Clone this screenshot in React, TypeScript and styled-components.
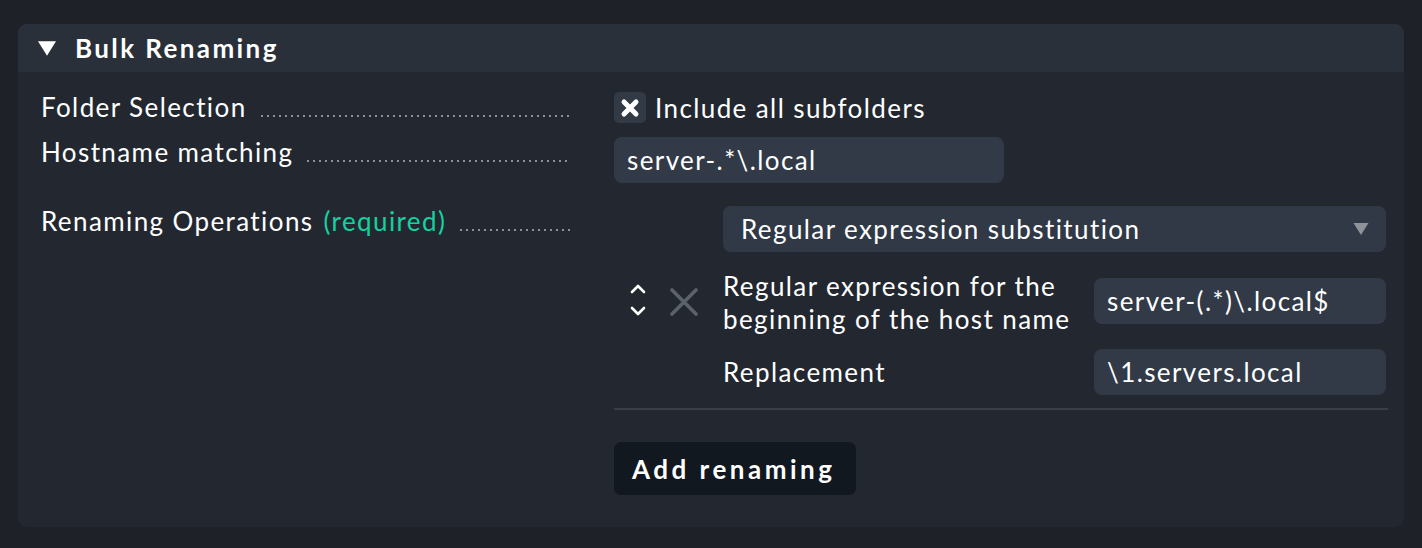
import React from "react";
import styled, { createGlobalStyle } from "styled-components";

const GlobalStyle = createGlobalStyle`
    html, body {
        margin: 0;
        padding: 0;
        background: #1e2128;
        font-family: Lato, "Noto Sans", sans-serif;
        color: #ffffff;
    }
`;

const Page = styled.div`
    padding: 24px 18px 21px 18px;
    height: 548px;
    box-sizing: border-box;
`;

const Panel = styled.section`
    background: #232830;
    border-radius: 9px;
    overflow: hidden;
    height: 503px;
`;

const PanelHeader = styled.header`
    background: #29303a;
    height: 48px;
    display: flex;
    align-items: center;
    padding-inline-start: 20px;
    gap: 19px;
`;

const Title = styled.h2`
    margin: 0;
    font-size: 26px;
    font-weight: 700;
    letter-spacing: 2.4px;
`;

const FormGrid = styled.div`
    display: grid;
    grid-template-columns: 530px 1fr;
    column-gap: 43px;
    row-gap: 14px;
    padding: 20px 16px 0 23px;
`;

const LabelCell = styled.div<{ $top?: number }>`
    display: flex;
    align-items: baseline;
    font-size: 26px;
    line-height: 30px;
    padding-top: ${(p) => p.$top ?? 0}px;
    white-space: nowrap;
    letter-spacing: 1.4px;
`;

const Leader = styled.span`
    flex: 1;
    margin-left: 12px;
    height: 2px;
    background-image: radial-gradient(circle, #8a9099 1px, transparent 1.2px);
    background-size: 6px 2px;
    background-repeat: repeat-x;
`;

const Required = styled.span`
    color: #15d1a0;
    margin-left: 10px;
`;

const ValueCell = styled.div<{ $top?: number }>`
    padding-top: ${(p) => p.$top ?? 0}px;
    letter-spacing: 1.4px;
`;

const CheckRow = styled.label`
    display: flex;
    align-items: center;
    gap: 9px;
    font-size: 26px;
    height: 31px;
`;

const CheckBox = styled.span`
    width: 32px;
    height: 31px;
    border-radius: 5px;
    background: #323a45;
    display: flex;
    align-items: center;
    justify-content: center;
`;

const TextInput = styled.div<{ $width?: number }>`
    box-sizing: border-box;
    width: ${(p) => (p.$width ? `${p.$width}px` : "100%")};
    height: 46px;
    background: #313a46;
    border-radius: 8px;
    padding: 0 13px;
    display: flex;
    align-items: center;
    font-size: 26px;
    color: #ffffff;
    white-space: nowrap;
`;

const Operations = styled.div`
    display: flex;
    flex-direction: column;
    width: 774px;
`;

const SelectBox = styled.div`
    box-sizing: border-box;
    margin-left: 109px;
    margin-right: 2px;
    height: 46px;
    background: #303945;
    border-radius: 8px;
    padding: 0 17px 0 18px;
    display: flex;
    align-items: center;
    justify-content: space-between;
    font-size: 26px;
`;

const OpEntry = styled.div`
    display: flex;
    margin-top: 18px;
`;

const Controls = styled.div`
    width: 109px;
    display: flex;
    align-items: flex-start;
    gap: 24px;
    padding-left: 16px;
    box-sizing: border-box;
`;

const Arrows = styled.div`
    display: flex;
    flex-direction: column;
    gap: 12px;
    padding-top: 14px;
`;

const RemoveWrap = styled.div`
    padding-top: 18px;
`;

const OpFields = styled.div`
    flex: 1;
    display: grid;
    grid-template-columns: 371px 1fr;
    align-items: center;
    row-gap: 13px;
    margin-right: 2px;
`;

const FieldLabel = styled.div`
    font-size: 26px;
    line-height: 33px;
    white-space: nowrap;
`;

const InputShift = styled.div`
    margin-top: -4px;
`;

const Divider = styled.hr`
    border: 0;
    height: 2px;
    background: #3a3f46;
    margin: 13px 0 0 0;
    width: 774px;
`;

const AddButton = styled.button`
    margin-top: 32px;
    width: 242px;
    height: 53px;
    padding: 0 0 0 18px;
    text-align: left;
    background: #111820;
    border: 0;
    border-radius: 7px;
    color: #ffffff;
    font-family: Lato, "Noto Sans", sans-serif;
    font-size: 26px;
    font-weight: 700;
    letter-spacing: 3.5px;
    cursor: pointer;
`;

const Triangle = ({ color, w, h }: { color: string; w: number; h: number }) => (
    <svg width={w} height={h} viewBox="0 0 10 8">
        <polygon points="0,0 10,0 5,8" fill={color} />
    </svg>
);

const Chevron = ({ up }: { up?: boolean }) => (
    <svg width="16" height="10" viewBox="0 0 16 10">
        <polyline
            points={up ? "2,8 8,2 14,8" : "2,2 8,8 14,2"}
            fill="none"
            stroke="#ffffff"
            strokeWidth="2.6"
            strokeLinecap="round"
            strokeLinejoin="round"
        />
    </svg>
);

const RemoveIcon = () => (
    <svg width="28" height="28" viewBox="0 0 28 28">
        <path d="M2 2 L26 26 M26 2 L2 26" stroke="#5b626c" strokeWidth="3.6" strokeLinecap="round" />
    </svg>
);

const CheckMark = () => (
    <svg width="20" height="20" viewBox="0 0 20 20">
        <path d="M4 4 L16 16 M16 4 L4 16" stroke="#ffffff" strokeWidth="5" strokeLinecap="round" />
    </svg>
);

export default function App() {
    return (
        <>
            <GlobalStyle />
            <Page>
                <Panel>
                    <PanelHeader>
                        <Triangle color="#ffffff" w={18} h={15} />
                        <Title>Bulk Renaming</Title>
                    </PanelHeader>
                    <FormGrid>
                        <LabelCell>
                            Folder Selection
                            <Leader />
                        </LabelCell>
                        <ValueCell>
                            <CheckRow>
                                <CheckBox>
                                    <CheckMark />
                                </CheckBox>
                                Include all subfolders
                            </CheckRow>
                        </ValueCell>

                        <LabelCell>
                            Hostname matching
                            <Leader />
                        </LabelCell>
                        <ValueCell>
                            <TextInput $width={390}>server-.*\.local</TextInput>
                        </ValueCell>

                        <LabelCell $top={9}>
                            Renaming Operations <Required>(required)</Required>
                            <Leader />
                        </LabelCell>
                        <ValueCell $top={9}>
                            <Operations>
                                <SelectBox>
                                    Regular expression substitution
                                    <Triangle color="#8e9299" w={16} h={12} />
                                </SelectBox>
                                <OpEntry>
                                    <Controls>
                                        <Arrows>
                                            <Chevron up />
                                            <Chevron />
                                        </Arrows>
                                        <RemoveWrap>
                                            <RemoveIcon />
                                        </RemoveWrap>
                                    </Controls>
                                    <OpFields>
                                        <FieldLabel>
                                            Regular expression for the
                                            <br />
                                            beginning of the host name
                                        </FieldLabel>
                                        <InputShift>
                                            <TextInput>server-(.*)\.local$</TextInput>
                                        </InputShift>
                                        <FieldLabel>Replacement</FieldLabel>
                                        <TextInput>\1.servers.local</TextInput>
                                    </OpFields>
                                </OpEntry>
                                <Divider />
                                <div>
                                    <AddButton>Add renaming</AddButton>
                                </div>
                            </Operations>
                        </ValueCell>
                    </FormGrid>
                </Panel>
            </Page>
        </>
    );
}
